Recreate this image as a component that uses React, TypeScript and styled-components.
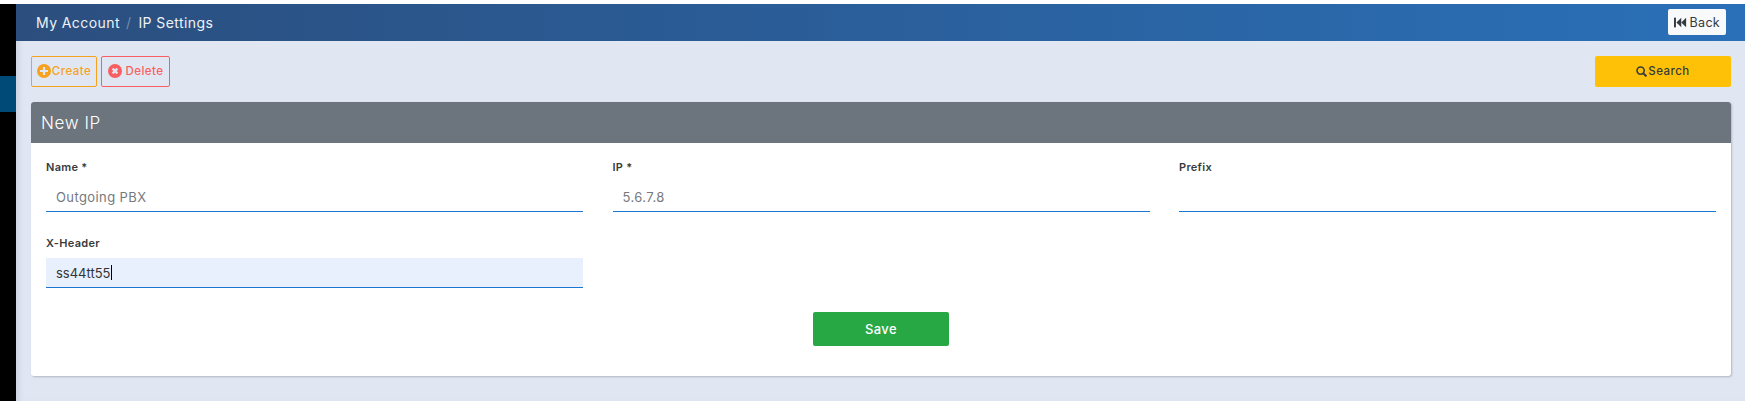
import React from 'react';
import styled, { createGlobalStyle } from 'styled-components';

const GlobalStyle = createGlobalStyle`
  html, body {
    margin: 0;
    padding: 0;
    background: #ffffff;
    font-family: "Inter", "Liberation Sans", sans-serif;
  }
  * {
    box-sizing: border-box;
  }
`;

const Page = styled.div`
  display: flex;
  height: 401px;
  padding-top: 4px;
  overflow: hidden;
`;

const Sidebar = styled.div`
  width: 16px;
  flex: none;
  background: #000000;
  padding-top: 72px;
`;

const SidebarActive = styled.div`
  height: 36px;
  background: #004a77;
`;

const Main = styled.div`
  flex: 1;
  min-width: 0;
  background: #e1e7f2;
  box-shadow: inset 6px 0 6px -4px rgba(120, 130, 160, 0.25);
`;

const TopBar = styled.div`
  height: 37px;
  display: flex;
  align-items: center;
  justify-content: space-between;
  padding: 0 19px 0 20px;
  background: linear-gradient(90deg, #2b4e7e 0%, #2a70b8 100%);
`;

const Crumbs = styled.div`
  display: flex;
  align-items: center;
  color: #eef2f7;
  font-size: 14px;
  font-weight: 400;
  letter-spacing: 0.42px;
`;

const CrumbSep = styled.span`
  color: #6f8db0;
  margin: 0 7px 0 6px;
`;

const BackButton = styled.button`
  display: flex;
  align-items: center;
  gap: 3px;
  width: 58px;
  height: 26px;
  margin-top: -1px;
  padding: 0 6px;
  border: none;
  border-radius: 2px;
  background: #f8f9fa;
  color: #343a40;
  font: inherit;
  font-size: 12.5px;
  letter-spacing: 0.3px;
`;

const Content = styled.div`
  padding: 15px 14px 0 15px;
`;

const Toolbar = styled.div`
  display: flex;
  align-items: stretch;
  gap: 4px;
  height: 31px;
`;

const OutlineButton = styled.button<{ $color: string; $width: number; $gap: number }>`
  display: flex;
  align-items: center;
  justify-content: center;
  gap: ${(p) => p.$gap}px;
  width: ${(p) => p.$width}px;
  padding: 0 0 1px;
  background: transparent;
  border: 1px solid ${(p) => p.$color};
  border-radius: 2px;
  color: ${(p) => p.$color};
  font: inherit;
  font-size: 11.5px;
  font-weight: 500;
  letter-spacing: 0.45px;
`;

const SearchButton = styled.button`
  display: flex;
  align-items: center;
  justify-content: center;
  gap: 1px;
  width: 136px;
  margin-left: auto;
  padding: 0 0 1px;
  border: none;
  border-radius: 2px;
  background: #ffc107;
  color: #343a40;
  font: inherit;
  font-size: 11.5px;
  font-weight: 500;
  letter-spacing: 0.45px;
`;

const Card = styled.div`
  margin-top: 15px;
  height: 274px;
  background: #ffffff;
  border-radius: 3px;
  box-shadow: 1px 1px 2px rgba(100, 110, 130, 0.4);
`;

const CardHeader = styled.div`
  height: 41px;
  display: flex;
  align-items: center;
  padding-left: 10px;
  background: #6c757d;
  border-radius: 3px 3px 0 0;
  color: #ffffff;
  font-size: 17px;
  font-weight: 300;
  letter-spacing: 0.6px;
`;

const CardBody = styled.div`
  padding: 17px 15px 0;
`;

const FormGrid = styled.div`
  display: grid;
  grid-template-columns: repeat(3, 1fr);
  column-gap: 29.5px;
  row-gap: 24px;
`;

const Field = styled.div`
  display: flex;
  flex-direction: column;
`;

const Label = styled.div`
  height: 15px;
  line-height: 15px;
  color: #3a3a3a;
  font-size: 11px;
  font-weight: 600;
  letter-spacing: 0.3px;
`;

const InputBox = styled.div<{ $filled?: boolean }>`
  display: flex;
  align-items: center;
  height: 30px;
  margin-top: 7px;
  padding-left: 10px;
  background: ${(p) => (p.$filled ? '#e8f0fe' : '#ffffff')};
  border-bottom: 1px solid #1976d2;
  color: ${(p) => (p.$filled ? '#333333' : '#75797e')};
  font-size: 13px;
  font-weight: 400;
  letter-spacing: ${(p) => (p.$filled ? '0' : '0.4px')};
`;

const Caret = styled.span`
  width: 1px;
  height: 15px;
  background: #000000;
`;

const Actions = styled.div`
  display: flex;
  justify-content: center;
  margin-top: 24px;
`;

const SaveButton = styled.button`
  width: 136px;
  height: 34px;
  border: none;
  border-radius: 2px;
  background: #28a745;
  color: #ffffff;
  font: inherit;
  font-size: 13px;
  font-weight: 500;
  letter-spacing: 0.35px;
`;

const BackIcon = () => (
  <svg width="13" height="11" viewBox="0 0 13 11" fill="currentColor">
    <rect x="0" y="0.5" width="2" height="10" />
    <path d="M7.5 0.5v10L2.5 5.5z" />
    <path d="M12.5 0.5v10L7.5 5.5z" />
  </svg>
);

const PlusIcon = () => (
  <svg width="14" height="14" viewBox="0 0 14 14">
    <circle cx="7" cy="7" r="7" fill="currentColor" />
    <path d="M7 3v8M3 7h8" stroke="#e1e7f2" strokeWidth="2.2" />
  </svg>
);

const CrossIcon = () => (
  <svg width="14" height="14" viewBox="0 0 14 14">
    <circle cx="7" cy="7" r="7" fill="currentColor" />
    <path d="M4.6 4.6l4.8 4.8M9.4 4.6l-4.8 4.8" stroke="#e1e7f2" strokeWidth="2.2" />
  </svg>
);

const SearchIcon = () => (
  <svg width="11" height="11" viewBox="0 0 11 11" fill="none" stroke="currentColor">
    <circle cx="4.6" cy="4.6" r="3.6" strokeWidth="1.6" />
    <path d="M7.4 7.4L10.4 10.4" strokeWidth="2" />
  </svg>
);

const App = () => {
  return (
    <>
      <GlobalStyle />
      <Page>
        <Sidebar>
          <SidebarActive />
        </Sidebar>
        <Main>
          <TopBar>
            <Crumbs>
              <span>My Account</span>
              <CrumbSep>/</CrumbSep>
              <span>IP Settings</span>
            </Crumbs>
            <BackButton>
              <BackIcon />
              Back
            </BackButton>
          </TopBar>
          <Content>
            <Toolbar>
              <OutlineButton $color="#f6a21e" $width={66} $gap={1}>
                <PlusIcon />
                Create
              </OutlineButton>
              <OutlineButton $color="#f95f62" $width={69} $gap={4}>
                <CrossIcon />
                Delete
              </OutlineButton>
              <SearchButton>
                <SearchIcon />
                Search
              </SearchButton>
            </Toolbar>
            <Card>
              <CardHeader>New IP</CardHeader>
              <CardBody>
                <FormGrid>
                  <Field>
                    <Label>Name *</Label>
                    <InputBox>Outgoing PBX</InputBox>
                  </Field>
                  <Field>
                    <Label>IP *</Label>
                    <InputBox>5.6.7.8</InputBox>
                  </Field>
                  <Field>
                    <Label>Prefix</Label>
                    <InputBox />
                  </Field>
                  <Field>
                    <Label>X-Header</Label>
                    <InputBox $filled>
                      ss44tt55
                      <Caret />
                    </InputBox>
                  </Field>
                </FormGrid>
                <Actions>
                  <SaveButton>Save</SaveButton>
                </Actions>
              </CardBody>
            </Card>
          </Content>
        </Main>
      </Page>
    </>
  );
};

export default App;
